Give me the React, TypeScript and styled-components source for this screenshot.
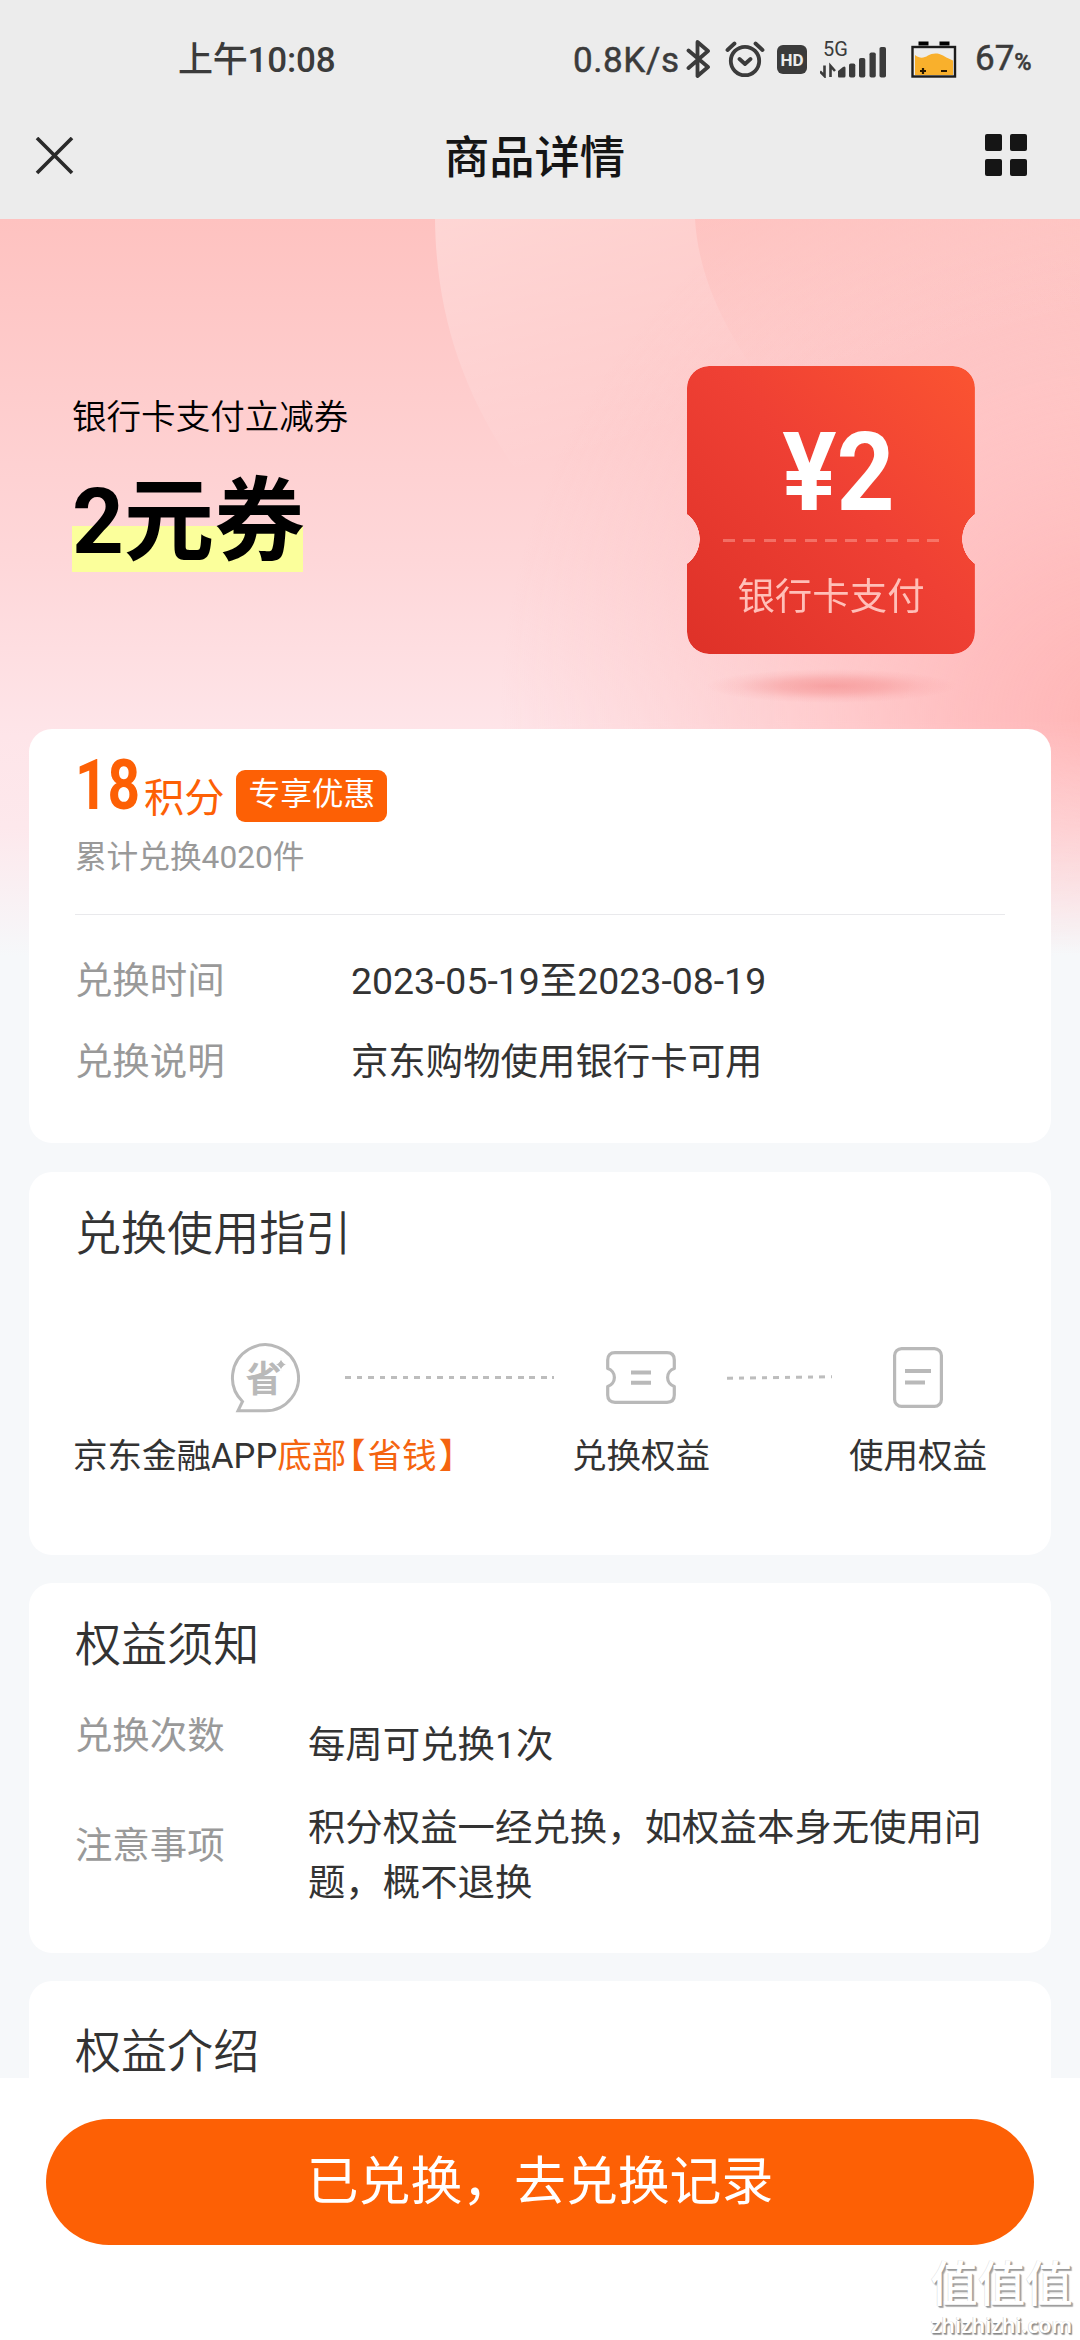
import React from 'react';
import styled, { createGlobalStyle } from 'styled-components';

const GlobalStyle = createGlobalStyle`
  * { box-sizing: border-box; }
  html, body { margin: 0; padding: 0; background: #fff; }
  body { font-family: Roboto, "Noto Sans CJK SC", sans-serif; color: #333; }
`;

const Page = styled.div`
  width: 1080px;
  height: 2340px;
  display: flex;
  flex-direction: column;
  overflow: hidden;
  background: #f6f8fa;
`;

/* ---------- top bars ---------- */

const TopBars = styled.header`
  height: 219px;
  flex: none;
  background: #ececec;
  display: flex;
  flex-direction: column;
`;

const StatusBar = styled.div`
  height: 118px;
  padding: 0 47px 0 178px;
  display: flex;
  align-items: center;
  justify-content: space-between;
  color: #3b3b3b;
  font-weight: 500;
`;

const Clock = styled.span`
  font-size: 35px;
  line-height: 44px;
  letter-spacing: -0.2px;
  margin-top: 4px;
`;

const StatusIcons = styled.div`
  display: flex;
  align-items: center;
  svg { display: block; flex: none; }
`;

const Speed = styled.span`
  width: 113px;
  font-size: 35px;
  line-height: 44px;
  font-weight: 400;
  letter-spacing: 0.6px;
  margin-top: 3px;
  -webkit-text-stroke: 0.5px #3b3b3b;
`;

const HdBadge = styled.span`
  width: 30px;
  height: 29px;
  margin-left: 12px;
  border-radius: 6px;
  background: #3b3b3b;
  color: #ececec;
  font-size: 17px;
  font-weight: 700;
  line-height: 30px;
  text-align: center;
`;

const Signal = styled.div`
  display: flex;
  flex-direction: column;
  width: 67px;
  height: 38px;
  margin-left: 13px;
  position: relative;
`;

const NetworkLabel = styled.span`
  position: absolute;
  left: 3px;
  top: 0;
  font-size: 20px;
  line-height: 19px;
  font-weight: 400;
`;

const Percent = styled.span`
  width: 58px;
  margin-left: 18px;
  font-size: 35px;
  line-height: 44px;
  font-weight: 400;
  margin-top: 3px;
  white-space: nowrap;
  -webkit-text-stroke: 0.5px #3b3b3b;
  small { font-size: 23.5px; font-weight: 500; }
`;

const NavBar = styled.div`
  height: 76px;
  padding: 0 53px 0 35px;
  display: grid;
  grid-template-columns: 96px 1fr 96px;
  align-items: center;
  svg { display: block; }
`;

const NavTitle = styled.h1`
  margin: 6px 0 0 7px;
  text-align: center;
  font-size: 45.3px;
  line-height: 60px;
  font-weight: 500;
  color: #151515;
`;

const NavMenu = styled.div`
  justify-self: end;
  display: grid;
  grid-template-columns: 17px 17px;
  gap: 8px;
  margin-bottom: 2px;
  i { height: 17px; border-radius: 2px; background: #151515; }
`;

/* ---------- scrolling content ---------- */

const Content = styled.main`
  flex: 1;
  min-height: 0;
  overflow: hidden;
  position: relative;
  background: #f6f8fa;
`;

const Backdrop = styled.svg`
  position: absolute;
  left: 0;
  top: 0;
`;

const Flow = styled.div`
  position: relative;
  display: flex;
  flex-direction: column;
`;

const Hero = styled.section`
  height: 510px;
  padding: 0 105px 0 72px;
  display: flex;
  justify-content: space-between;
  align-items: flex-start;
`;

const HeroText = styled.div`
  padding-top: 178px;
  display: flex;
  flex-direction: column;
  align-items: flex-start;
  color: #000;
`;

const HeroKicker = styled.p`
  margin: 0;
  font-size: 34.56px;
  line-height: 40px;
  font-weight: 350;
`;

const HeroTitle = styled.h2`
  width: 230.5px;
  margin: 32px 0 0;
  padding-top: 2px;
  font-size: 90.4px;
  line-height: 103px;
  height: 103px;
  font-weight: 700;
  white-space: nowrap;
  background: linear-gradient(to bottom, transparent 57px, #fbff9b 57px);
`;

const Ticket = styled.div`
  width: 288px;
  margin-top: 147px;
  display: flex;
  flex-direction: column;
  align-items: center;
`;

const TicketBody = styled.div`
  width: 288px;
  height: 288px;
  border-radius: 22px;
  background: linear-gradient(225deg, #fb5431 0%, #ef4034 45%, #de3128 100%);
  display: flex;
  flex-direction: column;
  align-items: center;
  mask:
    radial-gradient(circle 31px at -18px 173px, transparent 30.5px, #000 31px) left / 51% 100% no-repeat,
    radial-gradient(circle 31px at calc(100% + 18px) 173px, transparent 30.5px, #000 31px) right / 51% 100% no-repeat;
`;

const TicketValue = styled.strong`
  margin: 53px 0 0 15px;
  font-size: 109px;
  line-height: 109px;
  font-weight: 700;
  color: #fff;
  transform: scaleX(0.93);
`;

const TicketDash = styled.div`
  width: 217px;
  height: 2.5px;
  margin-top: 11px;
  background: repeating-linear-gradient(to right, rgba(255, 175, 165, 0.45) 0 12px, transparent 12px 20.4px);
`;

const TicketLabel = styled.span`
  margin-top: 30px;
  font-size: 37.44px;
  line-height: 50px;
  color: #ffbfb8;
`;

const TicketShadow = styled.div`
  width: 250px;
  height: 34px;
  margin-top: 15px;
  background: radial-gradient(ellipse 50% 50% at center, rgba(236, 100, 98, 0.4), rgba(238, 110, 108, 0.3) 40%, rgba(240, 120, 120, 0.1) 75%, transparent);
`;

const Card = styled.section<{ $height: number; $top: number }>`
  height: ${(p) => p.$height}px;
  margin: 0 28.8px 28.5px;
  padding: ${(p) => p.$top}px 46.1px 0;
  border-radius: 23px;
  background: #fff;
  flex: none;
`;

const CardTitle = styled.h3`
  margin: 0;
  font-size: 46.08px;
  line-height: 60px;
  font-weight: 350;
  color: #333;
`;

const PriceRow = styled.div`
  height: 63px;
  display: flex;
  align-items: flex-start;
  color: #fd6005;
`;

const Points = styled.strong`
  width: 69px;
  font-size: 71px;
  line-height: 51px;
  font-weight: 700;
  transform: scaleX(0.8);
  transform-origin: left;
  white-space: nowrap;
`;

const PointsUnit = styled.span`
  margin-top: 20px;
  font-size: 40.3px;
  line-height: 40px;
`;

const Tag = styled.span`
  height: 52px;
  margin: 11px 0 0 12px;
  padding: 9px 12px 0;
  border-radius: 9px;
  background: #fd6005;
  color: #fff;
  font-size: 31.68px;
  line-height: 32px;
`;

const Sold = styled.p`
  margin: 14px 0 0;
  font-size: 31.68px;
  line-height: 44px;
  color: #999;
`;

const Divider = styled.hr`
  margin: 34px 0 39px;
  border: 0;
  height: 1px;
  background: #e9e9ec;
`;

const InfoList = styled.dl`
  margin: 0;
  display: grid;
  grid-template-columns: 276px 1fr;
  row-gap: 27px;
  font-size: 37.44px;
  line-height: 54px;
  dt { color: #999; }
  dd { margin: 0; color: #333; }
`;

const StepIcons = styled.div`
  margin: 79px 0 0 155px;
  height: 70px;
  display: flex;
  align-items: center;
  svg { display: block; flex: none; }
`;

const Dots = styled.div<{ $width: number; $before: number; $after: number; $tilt?: number }>`
  width: ${(p) => p.$width}px;
  height: 3px;
  flex: none;
  margin: 0 ${(p) => p.$after}px 0 ${(p) => p.$before}px;
  transform: rotate(${(p) => p.$tilt ?? 0}deg);
  background: repeating-linear-gradient(to right, #bdbdbd 0 5.8px, transparent 5.8px 11.52px);
`;

const StepLabels = styled.div`
  margin: 21px -12px 0 -2px;
  display: flex;
  font-size: 34.56px;
  line-height: 44px;
  color: #333;
  white-space: nowrap;
`;

const StepLabel = styled.span<{ $width: number }>`
  width: ${(p) => p.$width}px;
  flex: none;
  em { font-style: normal; color: #f5640f; }
`;

const Bracket = styled.span`
  font-family: "Noto Sans CJK SC", sans-serif;
  font-feature-settings: "halt";
  line-height: 0;
  margin: 0 2px 0 2px;
`;

const Notices = styled.div`
  margin-top: 43px;
  display: grid;
  grid-template-columns: 233px 1fr;
  row-gap: 28px;
  font-size: 37.44px;
`;

const NoticeLabel = styled.span<{ $line: number }>`
  color: #999;
  line-height: ${(p) => p.$line}px;
`;

const NoticeText = styled.p`
  margin: 0 -12px 0 0;
  line-height: 55px;
  color: #333;
`;

/* ---------- bottom bar ---------- */

const Footer = styled.footer`
  height: 262px;
  flex: none;
  padding: 41px 46px 0;
  background: #fff;
  position: relative;
`;

const RedeemButton = styled.button`
  display: block;
  width: 988px;
  height: 126px;
  padding: 0;
  border: 0;
  border-radius: 63px;
  background: #fd6005;
  color: #fff;
  font-family: inherit;
  font-size: 51.84px;
  line-height: 123px;
`;

const Watermark = styled.div`
  position: absolute;
  right: 7px;
  bottom: 4px;
  width: 143px;
  color: #fff;
  text-align: center;
  white-space: nowrap;
`;

const WatermarkName = styled.div`
  font-size: 47.5px;
  line-height: 50px;
  font-weight: 500;
  margin-bottom: 4px;
  text-shadow: 1px 1px 1px #999, 2px 2px 1px #aaa, -0.5px -0.5px 0.5px #ddd;
`;

const WatermarkSite = styled.div`
  font-family: "Noto Sans", sans-serif;
  font-size: 21.5px;
  line-height: 22px;
  font-weight: 600;
  text-shadow: 1px 1px 1px #888, 1.5px 1.5px 1px #aaa, -0.5px -0.5px 0.5px #ccc;
`;

const BluetoothIcon = () => (
  <svg width="25" height="40" viewBox="0 0 25 40" fill="none" stroke="#3b3b3b" strokeWidth="3.8" strokeLinecap="round" strokeLinejoin="round">
    <path d="M2.5 11.5 22 28 11.5 37V3L22 12 2.5 29" />
  </svg>
);

const AlarmIcon = () => (
  <svg width="40" height="38" viewBox="0 0 40 38" fill="none" stroke="#3b3b3b" strokeWidth="3.8" strokeLinecap="round" strokeLinejoin="round" style={{ marginLeft: 14 }}>
    <circle cx="20" cy="21" r="14.2" />
    <path d="M14.5 19 20 24 25.5 19M2.5 10 9.5 3.5M37.5 10 30.5 3.5" />
  </svg>
);

const SignalBars = () => (
  <svg width="67" height="38" viewBox="0 0 67 38" fill="#3b3b3b">
    <path d="M18 36v-5l5-4q2.500-1.500 2.500 1v8q0 1.500-1.500 1.500h-5q-1 0-1-1.500z" />
    <rect x="29" y="23.500" width="6.300" height="14" rx="1.800" />
    <rect x="39" y="18" width="6.300" height="19.500" rx="1.800" />
    <rect x="49.500" y="12.500" width="6.300" height="25" rx="1.800" />
    <rect x="59.500" y="7" width="6.500" height="30.500" rx="1.800" />
    <path d="M4.500 25.500V36L0 31.500M10.500 37V26l4.500 5" fill="none" stroke="#3b3b3b" strokeWidth="2.600" />
  </svg>
);

const BatteryIcon = () => (
  <svg width="46" height="37" viewBox="0 0 46 37" style={{ marginLeft: 24 }}>
    <path d="M7.500 0.500h10v4h-10zM28.500 0.500h10v4h-10z" fill="#000" />
    <rect x="1.500" y="6" width="42.500" height="29.500" fill="#ececec" stroke="#1c1c1c" strokeWidth="2.400" />
    <path d="M4 14c5 4 9 3 13 0.500s10-3 15 0 8 4 10 5V34H4z" fill="#f9b02c" />
    <path d="M9 30h6M12 27v6M30 30h6" stroke="#2a1a00" strokeWidth="2.200" />
  </svg>
);

const CloseIcon = () => (
  <svg width="39" height="39" viewBox="0 0 39 39" fill="none" stroke="#2a2a2a" strokeWidth="3.600">
    <path d="M2 1 37 36M37 1 2 36" />
  </svg>
);

const HeroBackdrop = () => (
  <Backdrop width="1080" height="760" viewBox="0 0 1080 760">
    <defs>
      <linearGradient id="base" x1="0" y1="0" x2="0" y2="1">
        <stop offset="0" stopColor="#fec2c0" />
        <stop offset="0.45" stopColor="#fed7d9" />
        <stop offset="0.68" stopColor="#fee5e9" />
        <stop offset="0.8" stopColor="#fde8ec" />
        <stop offset="0.97" stopColor="#f6f8fa" />
        <stop offset="1" stopColor="#f6f8fa" />
      </linearGradient>
      <radialGradient id="warm" gradientUnits="userSpaceOnUse" cx="0" cy="0" r="1" gradientTransform="translate(1120 500) scale(620 620)">
        <stop offset="0" stopColor="#ffb4b5" />
        <stop offset="0.25" stopColor="#ffb8b9" stopOpacity="0.85" />
        <stop offset="1" stopColor="#ffc4c4" stopOpacity="0" />
      </radialGradient>
      <linearGradient id="fadeDown" x1="0" y1="0" x2="0" y2="1">
        <stop offset="0.66" stopColor="#fff" />
        <stop offset="0.97" stopColor="#000" />
      </linearGradient>
      <mask id="warmMask">
        <rect width="1080" height="760" fill="url(#fadeDown)" />
      </mask>
      <linearGradient id="band" gradientUnits="userSpaceOnUse" x1="450" y1="0" x2="525" y2="255">
        <stop offset="0" stopColor="#fff" stopOpacity="0.32" />
        <stop offset="1" stopColor="#fff" stopOpacity="0" />
      </linearGradient>
      <linearGradient id="inner" gradientUnits="userSpaceOnUse" x1="700" y1="0" x2="740" y2="165">
        <stop offset="0" stopColor="#ffb9b6" stopOpacity="0.55" />
        <stop offset="1" stopColor="#ffbcb9" stopOpacity="0" />
      </linearGradient>
    </defs>
    <rect width="1080" height="760" fill="url(#base)" />
    <g mask="url(#warmMask)">
      <rect width="1080" height="760" fill="url(#warm)" />
    </g>
    <path d="M435 0C436 90 460 165 506 236L540 290H1080V0z" fill="url(#band)" />
    <path d="M695 0C698 50 718 100 757 155L810 230H1080V0z" fill="url(#inner)" />
  </Backdrop>
);

const SaveIcon = () => (
  <svg width="70" height="70" viewBox="0 0 70 70">
    <path d="M12.500 58.500A33 33 0 1 1 35 67.800H8L12.500 58.500z" fill="none" stroke="#b9b9b9" strokeWidth="3" />
    <text x="33.500" y="48.500" textAnchor="middle" fontFamily="Noto Sans CJK SC" fontWeight="700" fontSize="36" fill="#b9b9b9">省</text>
    <path d="M51 15q1 5.500 6 6.500q-5 1-6 6.500q-1-5.500-6-6.500q5-1 6-6.500z" fill="#b9b9b9" stroke="#fff" strokeWidth="1" />
  </svg>
);

const CouponIcon = () => (
  <svg width="70" height="53" viewBox="0 0 70 53" fill="none" stroke="#b9b9b9">
    <path d="M9 1.700H61Q68.300 1.700 68.300 9V17.500A9.400 9.400 0 0 0 68.300 35.500V44Q68.300 51.300 61 51.300H9Q1.700 51.300 1.700 44V35.500A9.400 9.400 0 0 0 1.700 17.500V9Q1.700 1.700 9 1.700z" strokeWidth="3.200" strokeLinejoin="round" />
    <path d="M25 21.500H45M25 31.700H45" strokeWidth="4" />
  </svg>
);

const DocIcon = () => (
  <svg width="50" height="61" viewBox="0 0 50 61" fill="none" stroke="#b9b9b9">
    <rect x="1.600" y="1.600" width="46.800" height="57.800" rx="7" strokeWidth="3.200" />
    <path d="M12 24H38M12 35.500H32" strokeWidth="4" />
  </svg>
);

export default function App() {
  return (
    <Page>
      <GlobalStyle />
      <TopBars>
        <StatusBar>
          <Clock>上午10:08</Clock>
          <StatusIcons>
            <Speed>0.8K/s</Speed>
            <BluetoothIcon />
            <AlarmIcon />
            <HdBadge>HD</HdBadge>
            <Signal>
              <SignalBars />
              <NetworkLabel>5G</NetworkLabel>
            </Signal>
            <BatteryIcon />
            <Percent>67<small>%</small></Percent>
          </StatusIcons>
        </StatusBar>
        <NavBar>
          <CloseIcon />
          <NavTitle>商品详情</NavTitle>
          <NavMenu><i /><i /><i /><i /></NavMenu>
        </NavBar>
      </TopBars>

      <Content>
        <HeroBackdrop />
        <Flow>
          <Hero>
            <HeroText>
              <HeroKicker>银行卡支付立减券</HeroKicker>
              <HeroTitle>2元券</HeroTitle>
            </HeroText>
            <Ticket>
              <TicketBody>
                <TicketValue>¥2</TicketValue>
                <TicketDash />
                <TicketLabel>银行卡支付</TicketLabel>
              </TicketBody>
              <TicketShadow />
            </Ticket>
          </Hero>

          <Card $height={414} $top={30}>
            <PriceRow>
              <Points>18</Points>
              <PointsUnit>积分</PointsUnit>
              <Tag>专享优惠</Tag>
            </PriceRow>
            <Sold>累计兑换4020件</Sold>
            <Divider />
            <InfoList>
              <dt>兑换时间</dt>
              <dd>2023-05-19至2023-08-19</dd>
              <dt>兑换说明</dt>
              <dd>京东购物使用银行卡可用</dd>
            </InfoList>
          </Card>

          <Card $height={383} $top={32}>
            <CardTitle>兑换使用指引</CardTitle>
            <StepIcons>
              <SaveIcon />
              <Dots $width={209} $before={45} $after={52} />
              <CouponIcon />
              <Dots $width={105} $before={51} $after={61} $tilt={-0.7} />
              <DocIcon />
            </StepIcons>
            <StepLabels>
              <StepLabel $width={499}>
                京东金融APP<em>底部<Bracket>【</Bracket>省钱<Bracket>】</Bracket></em>
              </StepLabel>
              <StepLabel $width={277}>兑换权益</StepLabel>
              <StepLabel $width={139}>使用权益</StepLabel>
            </StepLabels>
          </Card>

          <Card $height={369.5} $top={32}>
            <CardTitle>权益须知</CardTitle>
            <Notices>
              <NoticeLabel $line={37}>兑换次数</NoticeLabel>
              <NoticeText>每周可兑换1次</NoticeText>
              <NoticeLabel $line={90}>注意事项</NoticeLabel>
              <NoticeText>积分权益一经兑换，如权益本身无使用问题，概不退换</NoticeText>
            </Notices>
          </Card>

          <Card $height={369} $top={41}>
            <CardTitle>权益介绍</CardTitle>
          </Card>
        </Flow>
      </Content>

      <Footer>
        <RedeemButton>已兑换，去兑换记录</RedeemButton>
        <Watermark>
          <WatermarkName>值值值</WatermarkName>
          <WatermarkSite>zhizhizhi.com</WatermarkSite>
        </Watermark>
      </Footer>
    </Page>
  );
}
